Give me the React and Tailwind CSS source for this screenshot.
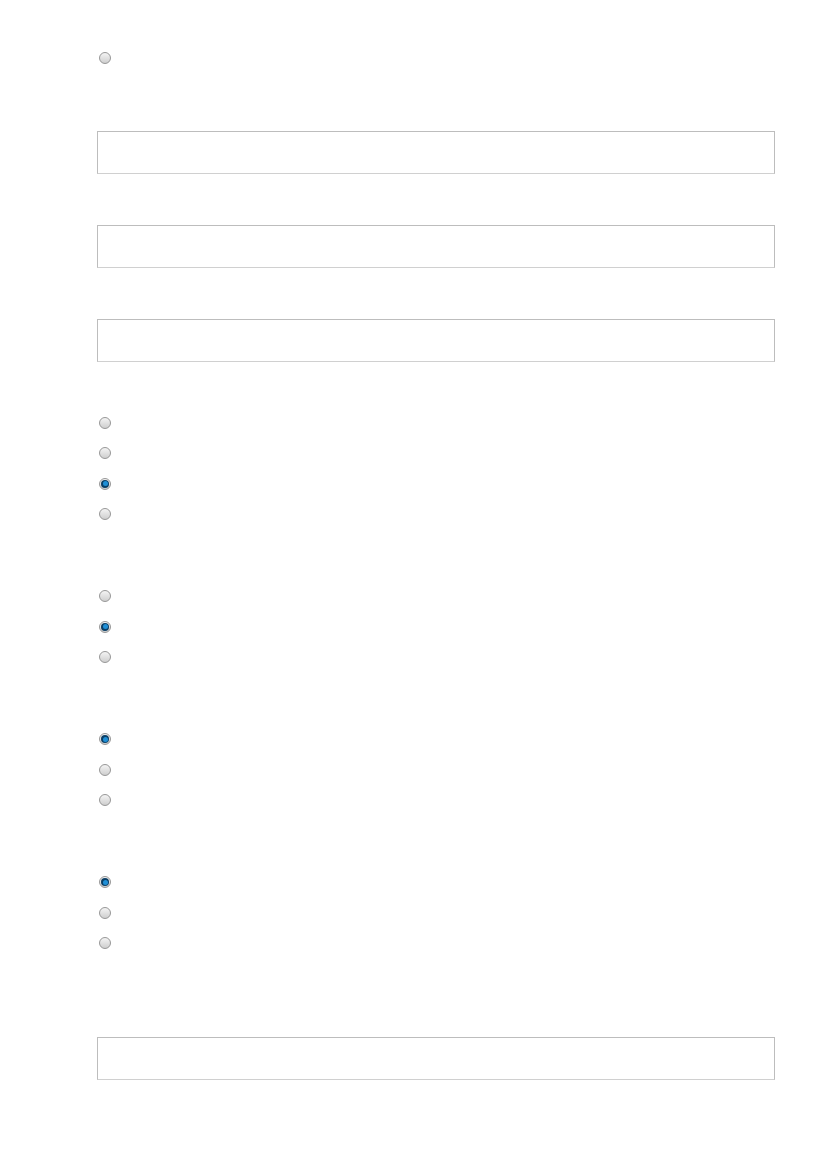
// Formulário vazio: rádios e caixas de texto
function Radio({ checked }) {
  return (
    <span className="w-[12px] h-[12px] ml-[2px] rounded-full border border-[#979797] bg-gradient-to-b from-[#f4f4f4] to-[#cfcfcf] flex items-center justify-center shrink-0">
      {checked && (
        <span className="w-[8px] h-[8px] rounded-full bg-[#0b3f66] flex items-center justify-center">
          <span className="w-[5px] h-[5px] rounded-full bg-[#1f8fd6]" />
        </span>
      )}
    </span>
  )
}

function Box({ mt }) {
  return <div className={`h-[43px] w-[678px] border border-[#bdbdbd] border-b-[#d0d0d0] bg-white ${mt}`} />
}

function Group({ items, mt }) {
  return (
    <div className={`flex flex-col gap-[18.5px] ${mt}`}>
      {items.map((c, i) => (
        <Radio key={i} checked={c} />
      ))}
    </div>
  )
}

export default function App() {
  return (
    <div className="min-h-[1169px] bg-white pl-[97px] flex flex-col" style={{ fontFamily: "'Liberation Sans', sans-serif" }}>
      <div className="mt-[52px] flex">
        <Radio />
      </div>
      <Box mt="mt-[67px]" />
      <Box mt="mt-[51px]" />
      <Box mt="mt-[51px]" />

      <Group items={[false, false, true, false]} mt="mt-[54.5px]" />
      <Group items={[false, true, false]} mt="mt-[70px]" />
      <Group items={[true, false, false]} mt="mt-[70px]" />
      <Group items={[true, false, false]} mt="mt-[70px]" />

      <Box mt="mt-[87.5px]" />
    </div>
  )
}
